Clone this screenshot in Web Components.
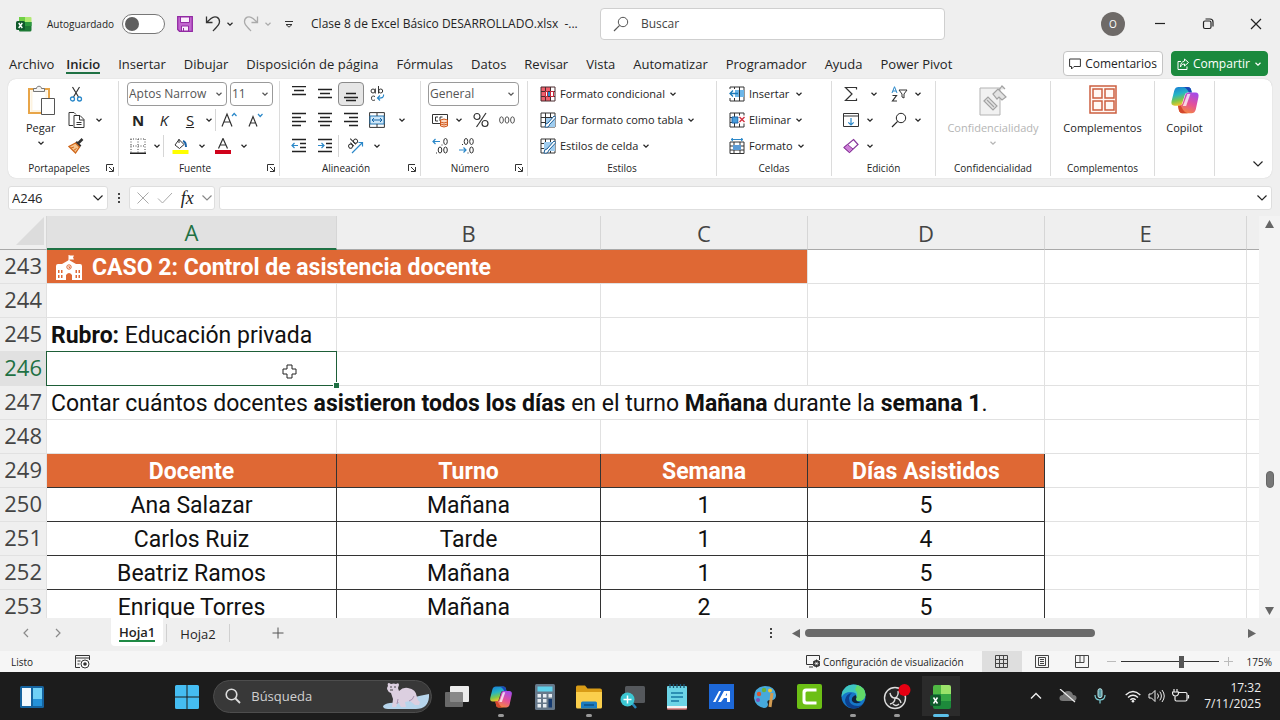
<!DOCTYPE html>
<html lang="es">
<head>
<meta charset="utf-8">
<title>Clase 8 de Excel Básico DESARROLLADO.xlsx</title>
<style>
  body {
    margin: 0;
    background: #efefef;
    color: #242424;
    font: 12px/16px "Open Sans", "Noto Sans", sans-serif;
  }
</style>
</head>
<body>
<excel-app></excel-app>

<script>
const grid = (color) => `<path d="M1 1h14v14H1zM1 5.5h14M1 10.5h14M5.5 1v14M10.5 1v14" stroke="${color}" fill="none"/>`;
const lines = (rows) => `<path d="${rows.map(([x, y, w]) => `M${x} ${y}.5h${w}`).join("")}" stroke="#222" stroke-width="1.3"/>`;
const copilot = `
  <defs>
    <linearGradient id="ca" x1="0" y1="0" x2="0.3" y2="1"><stop offset="0" stop-color="#1a78d8"/><stop offset=".45" stop-color="#25b5c4"/><stop offset=".75" stop-color="#7fc64a"/><stop offset="1" stop-color="#f3c52b"/></linearGradient>
    <linearGradient id="cb" x1=".7" y1="0" x2=".3" y2="1"><stop offset="0" stop-color="#a54be8"/><stop offset=".5" stop-color="#e4509a"/><stop offset="1" stop-color="#f58a3a"/></linearGradient>
  </defs>
  <path d="M13 2h6c2 0 3 1 3.500 3l.8 3h-4c-2 0-3 1-3.600 3l-2.500 8c-.6 2-1.500 3-3.500 3H5c-3 0-4-2-3.300-5L4.500 6C5.300 3 7 2 9 2z" fill="url(#ca)"/>
  <path d="M13 2h6c2 0 3 1 3.500 3l.8 3h-3c-2-4-4-6-7.300-6z" fill="#1c47b8"/>
  <path d="M19 30h-6c-2 0-3-1-3.500-3l-1-5c3 0 4.500-1 5.200-3l2.500-8c.6-2 1.500-3 3.500-3H27c3 0 4 2 3.300 5L27.500 26c-.8 3-2.500 4-4.500 4z" fill="url(#cb)"/>
  <path d="M19 30h-6c-2 0-3-1-3.500-3l-1-5h3c2 4 3.500 7 7.500 8z" fill="#d4472e"/>
  <path d="M18.500 9.500h3.200l-4.500 13h-3.500z" fill="#fff" opacity=".75"/>`;

// name: [width, height, viewBox, markup]
const ICONS = {
  caret: [8, 8, "0 0 8 8", `<path d="M1.500 2.800L4 5.200l2.500-2.400" fill="none" stroke="currentColor" stroke-width="1.200"/>`],
  chevron: [12, 12, "0 0 12 12", `<path d="M1.500 3.500L6 8l4.500-4.500" fill="none" stroke="currentColor" stroke-width="1.200"/>`],
  left: [12, 12, "0 0 12 12", `<path d="M8 2L4 6l4 4" fill="none" stroke="#8a8a8a" stroke-width="1.200"/>`],
  right: [12, 12, "0 0 12 12", `<path d="M4 2l4 4-4 4" fill="none" stroke="#8a8a8a" stroke-width="1.200"/>`],
  excel: [16, 16, "0 0 16 16", `<path d="M3 1h7v5H3z" fill="#6fd045"/><path d="M9 1h5.500q1 0 1 1v4H9z" fill="#b2ea74"/><path d="M3 6h12.500v8q0 1.500-1.500 1.500H4q-1 0-1-1z" fill="#1d7a35"/><path d="M9 6h6.500v4H9z" fill="#2c9a3e"/><rect y="5" width="9" height="9" rx="1.500" fill="#0f5a2b"/><path d="M2.700 7l3.600 5M6.300 7l-3.600 5" stroke="#fff" stroke-width="1.400"/>`],
  save: [16, 16, "0 0 16 16", `<path d="M.7.700h14.600v14.600H2.500L.7 13.500z" fill="#c265cf" stroke="#922aa3" stroke-width="1.300"/><path d="M3.500 1h9v5.500h-9zM4.500 10h7v5h-7z" fill="#fbeefc" stroke="#922aa3"/><path d="M6.500 12v3" stroke="#922aa3"/>`],
  undo: [16, 18, "0 0 16 18", `<path d="M1.500 1.500v6h6M2 7l4-3.500c4-3.500 8.500-1 8.500 3 0 2.500-1 3.500-6.500 9.500" fill="none" stroke="#333" stroke-width="1.300"/>`],
  redo: [16, 18, "0 0 16 18", `<path d="M14.500 1.500v6h-6M14 7l-4-3.500c-4-3.500-8.500-1-8.500 3 0 2.500 1 3.500 6.500 9.500" fill="none" stroke="#aaa" stroke-width="1.300"/>`],
  custom: [10, 10, "0 0 10 10", `<path d="M1 2.500h8M2 5.500h6L5 8.200z" stroke="#333" fill="none"/>`],
  lens: [16, 16, "0 0 16 16", `<circle cx="10" cy="6" r="4.700" fill="none" stroke="currentColor"/><path d="M6.600 9.300L1 15" stroke="currentColor" stroke-width="1.200"/>`],
  min: [12, 12, "0 0 12 12", `<path d="M1 5.500h10" stroke="#222" stroke-width="1.200"/>`],
  restore: [12, 12, "0 0 12 12", `<rect x="1.500" y="3" width="7.500" height="7.500" rx="1.500" fill="none" stroke="#222" stroke-width="1.200"/><path d="M3.500 1h4.500Q11 1 11 4v4.500" fill="none" stroke="#222" stroke-width="1.200"/>`],
  close: [12, 12, "0 0 12 12", `<path d="M1 1l10 10M11 1L1 11" stroke="#222" stroke-width="1.200"/>`],
  comment: [12, 12, "0 0 12 12", `<path d="M.6 1h10.800v7.500H5L2.500 11V8.500H.6z" fill="none" stroke="#333"/>`],
  share: [12, 12, "0 0 12 12", `<path d="M4 3.500H1v8h9V8.500M7.500 1l4 3.500-4 3.500V6C5 6 4 7 3.500 9c0-3.500 1.500-5.500 4-6z" fill="none" stroke="#fff"/>`],
  launch: [8, 8, "0 0 8 8", `<path d="M.5 7V.5H7M3 3l4 4M7.500 3v4.500H3" fill="none" stroke="#333"/>`],
  paste: [28, 32, "0 0 28 32", `<path d="M2 4h20v24H2z" fill="#fff" stroke="#e8a548" stroke-width="2"/><path d="M3.500 5h17v22h-17z" fill="#fdf3e0"/><path d="M5.500 7h13v18h-13z" fill="#fff"/><path d="M6.500 6.500V3.500h3C9.500.5 14.500.500 14.500 3.500h3v3z" fill="#f3f3f3" stroke="#777"/><path d="M14.500 13.500h13v16h-13z" fill="#fff" stroke="#555"/>`],
  cut: [14, 16, "0 0 14 16", `<path d="M3.500 1l6 10M10.500 1l-6 10" stroke="#333" stroke-width="1.200"/><circle cx="3.500" cy="13" r="2" fill="none" stroke="#2b88c9" stroke-width="1.300"/><circle cx="10.500" cy="13" r="2" fill="none" stroke="#2b88c9" stroke-width="1.300"/>`],
  copy: [17, 16, "0 0 17 16", `<path d="M5 13.500H1V.5h5l2 2M6 3.500h6l4 4V15.500H6zM11.500 3.500V8H16M8.500 10.500h5M8.500 12.500h5" fill="none" stroke="#333"/>`],
  brush: [16, 16, "0 0 16 16", `<path d="M14.500 1l-5 5M8 4l4.500 4.500" stroke="#333" stroke-width="2.500"/><path d="M7.500 5L1 8.500 7.500 15 11.500 9z" fill="#f6c48e" stroke="#d0681c" stroke-width="1.300"/><path d="M3 10l3-1M5.500 12.500l3-2" stroke="#d0681c"/>`],
  borders: [16, 16, "0 0 16 16", `<path d="M.5 1h15M.5 8h15M1 1v14M8 1v14M15 1v14" stroke="#444" stroke-dasharray="1 1.500"/><path d="M0 15.300h16" stroke="#222" stroke-width="1.400"/>`],
  fill: [17, 16, "0 0 17 16", `<path d="M7 1.500l5 5-4.500 4L3 7z" fill="none" stroke="#333"/><path d="M7 1v4" stroke="#333"/><path d="M11 3q3 1 3 6" stroke="#1c64a8" stroke-width="2" fill="none"/><path d="M.5 12h16v4H.5z" fill="#ffff00"/>`],
  fontcolor: [16, 16, "0 0 16 16", `<path d="M3.500 10.500L8 .500l4.500 10M5 7h6" fill="none" stroke="#333" stroke-width="1.200"/><path d="M0 12h16v4H0z" fill="#d0021b"/>`],
  bigger: [16, 16, "0 0 16 16", `<path d="M1 14.500L6 2l5 12.500M2.800 10h6.400" fill="none" stroke="#333" stroke-width="1.200"/><path d="M11 4l2.200-2.500L15.500 4" fill="none" stroke="#2b88c9" stroke-width="1.200"/>`],
  smaller: [15, 16, "0 0 15 16", `<path d="M1 14.500L5 4.500l4 10M2.300 11h5.400" fill="none" stroke="#333" stroke-width="1.200"/><path d="M10 2l2.200 2.500L14.500 2" fill="none" stroke="#2b88c9" stroke-width="1.200"/>`],
  atop: [16, 16, "0 0 16 16", lines([[1, 0, 14], [3, 4, 10], [1, 8, 14]])],
  amid: [16, 16, "0 0 16 16", lines([[1, 3, 14], [3, 7, 10], [1, 11, 14]])],
  abot: [16, 16, "0 0 16 16", lines([[3, 7, 10], [1, 11, 14], [3, 14, 10]])],
  wrap: [15, 16, "0 0 15 16", `<g fill="none" stroke="#333"><circle cx="3" cy="5" r="2"/><path d="M5.300 2.500v5M8.500 0v7.500M5 10.500q-3.500-1.500-3.500 1.700T5 14"/><circle cx="10.700" cy="5" r="2"/></g><path d="M13.500 8.500q1 4-5.500 3.500M10 9.500L7.500 12l2.500 2.500" fill="none" stroke="#2b88c9" stroke-width="1.200"/>`],
  aleft: [16, 16, "0 0 16 16", lines([[1, 1, 14], [1, 5, 9], [1, 9, 14], [1, 13, 9]])],
  acenter: [16, 16, "0 0 16 16", lines([[1, 1, 14], [3, 5, 10], [1, 9, 14], [3, 13, 10]])],
  aright: [16, 16, "0 0 16 16", lines([[1, 1, 14], [6, 5, 9], [1, 9, 14], [6, 13, 9]])],
  merge: [16, 16, "0 0 16 16", `<path d="M.6.600h14.800v14.800H.6z" fill="#fff" stroke="#333"/><path d="M1 4h14v8H1z" fill="#cfe7f8" stroke="#2477b3"/><path d="M8 1v3M8 12v3" stroke="#333"/><path d="M3 8h10M5 6L3 8l2 2M11 6l2 2-2 2" fill="none" stroke="#1667a8"/>`],
  outdent: [16, 16, "0 0 16 16", lines([[1, 1, 14], [9, 5, 6], [9, 9, 6], [1, 13, 14]]) + `<path d="M7 7.500H1M3.500 5L1 7.500 3.500 10" fill="none" stroke="#2b88c9" stroke-width="1.200"/>`],
  indent: [16, 16, "0 0 16 16", lines([[1, 1, 14], [9, 5, 6], [9, 9, 6], [1, 13, 14]]) + `<path d="M1 7.500h6M4.500 5L7 7.500 4.500 10" fill="none" stroke="#2b88c9" stroke-width="1.200"/>`],
  orient: [17, 16, "0 0 17 16", `<g fill="none" stroke="#333" transform="rotate(-45 5 6)"><circle cx="2.500" cy="6.500" r="2"/><path d="M4.800 4v5M7.500 1v8"/><circle cx="9.500" cy="6.500" r="2"/></g><path d="M5 15L15.500 4.500M11.500 4.500h4v4" fill="none" stroke="#2b88c9" stroke-width="1.200"/>`],
  money: [16, 16, "0 0 16 16", `<path d="M.5 2.500h15v9H.5z" fill="#fff" stroke="#333"/><path d="M6 5H3.500v4H6M10.500 5H8v4h1.500" fill="none" stroke="#333"/><path d="M8.500 8q3.500-2 7 0v6q-3.500 2-7 0z" fill="#fbd9c4" stroke="#d0591c"/><path d="M8.500 10q3.500 2 7 0M8.500 12q3.500 2 7 0" fill="none" stroke="#d0591c"/>`],
  percent: [16, 16, "0 0 16 16", `<g fill="none" stroke="#333" stroke-width="1.200"><circle cx="4" cy="4.500" r="3"/><circle cx="12" cy="11.500" r="3"/><path d="M13 1L3.500 15"/></g>`],
  thousands: [16, 10, "0 0 16 10", `<g fill="none" stroke="#555"><ellipse cx="2.500" cy="5" rx="1.900" ry="3.200"/><ellipse cx="8" cy="5" rx="1.900" ry="3.200"/><ellipse cx="13.500" cy="5" rx="1.900" ry="3.200"/></g>`],
  incdec: [16, 16, "0 0 16 16", `<g fill="none" stroke="#333"><ellipse cx="13.500" cy="3.500" rx="1.800" ry="3"/><ellipse cx="8" cy="12" rx="1.800" ry="3"/><ellipse cx="13.500" cy="12" rx="1.800" ry="3"/><path d="M10 6.500v1M4.500 14.500v1"/></g><path d="M8 3.500H1M3.500 1L1 3.500 3.500 6" fill="none" stroke="#2b88c9" stroke-width="1.200"/>`],
  decdec: [16, 16, "0 0 16 16", `<g fill="none" stroke="#333"><ellipse cx="8" cy="3.500" rx="1.800" ry="3"/><ellipse cx="13.500" cy="3.500" rx="1.800" ry="3"/><ellipse cx="13.500" cy="12" rx="1.800" ry="3"/><path d="M4.500 6v1M10 14.500v1"/></g><path d="M1 12h7M5.500 9.500L8 12l-2.500 2.500" fill="none" stroke="#2b88c9" stroke-width="1.200"/>`],
  cond: [16, 16, "0 0 16 16", `<path d="M1 1h9v4H1zM1 10h9v5H1zM1 5h4v5H1z" fill="#f0606c"/>${grid("#4a2a2e")}<path d="M5.500 5.500h2v5h-2zM10.500 5.500h3v5h-3z" fill="#fff" stroke="#c8283a"/><path d="M8 6h2v4H8z" fill="#2b88c9"/>`],
  tablefmt: [16, 16, "0 0 16 16", `${grid("#333")}<path d="M6 6h9v9H6z" fill="#9fcdf0"/><path d="M5 15q0-4 3-4L14 4l2 1.500L9.500 12.500Q9 16 5 15z" fill="#fff" stroke="#1d5f97"/>`],
  cellstyle: [16, 16, "0 0 16 16", `${grid("#333")}<path d="M4 4h11v9H4z" fill="#9fcdf0"/><path d="M4 15q0-4 3-4L14 3l2 1.500L8.500 12.500Q8 16 4 15z" fill="#fff" stroke="#1d5f97"/>`],
  insertc: [16, 16, "0 0 16 16", `${grid("#333")}<path d="M5 4h10v7H5z" fill="#6cb6e8"/><path d="M0 3h6v9H0z" fill="#fff"/><path d="M9 7.500H1M4 4.500l-3 3 3 3" fill="none" stroke="#1c7ab8" stroke-width="1.300"/><path d="M10.500 4v7" stroke="#333"/>`],
  deletec: [16, 16, "0 0 16 16", `${grid("#333")}<path d="M3 5h6v6H3z" fill="#4a9edb" stroke="#1c64a8"/><path d="M9.500 3.500H16v8H9.500z" fill="#fff"/><path d="M10.500 5l5 5M15.500 5l-5 5" stroke="#d23040" stroke-width="1.400"/>`],
  formatc: [16, 16, "0 0 16 16", `<path d="M1 4h14v11.500H1zM1 8h14M1 12h14M5 4v11M11 4v11" fill="none" stroke="#333"/><path d="M4 7h8v5H4z" fill="#5b9bd5"/><path d="M2 1.500h12M4 0L2 1.500 4 3M12 0l2 1.500L12 3" fill="none" stroke="#2b88c9"/>`],
  sigma: [14, 16, "0 0 14 16", `<path d="M12.500 3.500V1.500H1.500L8 8l-6.500 6.500h11v-2" fill="none" stroke="#333" stroke-width="1.200"/>`],
  sort: [17, 16, "0 0 17 16", `<path d="M1 7L3.500.700 6 7M1.800 5h3.400" fill="none" stroke="#2b88c9"/><path d="M1.500 9.500h4L1.500 15h4.500" fill="none" stroke="#333" stroke-width="1.200"/><path d="M8 4h8l-3 4v4l-2-1V8z" fill="none" stroke="#333"/>`],
  filldown: [16, 14, "0 0 16 14", `<path d="M.5.500h15v13H.5zM.5 3h15" fill="none" stroke="#333"/><path d="M8 5v7M5.300 9.300L8 12l2.700-2.700" fill="none" stroke="#2b88c9" stroke-width="1.200"/>`],
  eraser: [16, 16, "0 0 16 16", `<path d="M10.500 1.500l4.500 5-8.500 8-5.500-5z" fill="#fff" stroke="#8a3a9c" stroke-width="1.200"/><path d="M4.500 6.500L1 9.500l5.500 5L10 11z" fill="#cf7fd8" stroke="#8a3a9c"/>`],
  label: [28, 32, "0 0 28 32", `<path d="M1 3h20v27H1z" fill="#f1f1f1" stroke="#b3b3b3"/><g stroke="#a3a3a3" fill="#e3e3e3" stroke-width="1.200"><path d="M5 16l4-4 9 9-4 4z"/><path d="M14 9l5-5 8 8-4 3-3-3-2 2z"/><path d="M20 5l3-4 3 3M8 15l7 7"/></g>`],
  addins: [28, 30, "0 0 28 30", `<g fill="#fff8f4" stroke="#cc5f40" stroke-width="1.500"><path d="M1 1h26v27H1z"/><path d="M4 4h9v9H4zM16 4h9v9h-9zM4 16h9v9H4zM16 16h9v9h-9z"/></g>`],
  copilot: [30, 30, "0 0 32 32", copilot],
  cancel: [14, 14, "0 0 14 14", `<path d="M1.500 1.500l11 11M12.500 1.500l-11 11" stroke="#aaa"/>`],
  accept: [16, 14, "0 0 16 14", `<path d="M1 7.500L5.500 12 15 2" fill="none" stroke="#aaa"/>`],
  dots: [4, 14, "0 0 4 14", `<path d="M1 2h2v2H1zM1 6h2v2H1zM1 10h2v2H1z" fill="#444"/>`],
  school: [26, 26, "0 0 26 26", `<path d="M13 0v6" stroke="#fff"/><path d="M13 .5h5l-1 2 1 2h-5z" fill="#fff"/><path d="M0 11q0-2 2-2h4l7-4 7 4h4q2 0 2 2v14H0z" fill="#fff"/><circle cx="13" cy="12" r="2.200" fill="none" stroke="#df6834"/><path d="M13 11v1.500h1" fill="none" stroke="#df6834"/><path d="M10 25.500V20q3-4 6 0v5.500zM2 15h1.500v3H2zM5 15h1.500v3H5zM2 20h1.500v3H2zM5 20h1.500v3H5zM19.500 15H21v3h-1.500zM22.500 15H24v3h-1.500zM19.500 20H21v3h-1.500zM22.500 20H24v3h-1.500z" fill="#df6834"/>`],
  cross: [15, 15, "0 0 15 15", `<path d="M5 1h5v4h4v5h-4v4H5v-4H1V5h4z" fill="#fff" stroke="#222"/>`],
  corner: [28, 28, "0 0 28 28", `<path d="M28 0v28H0z" fill="#dcdcdc"/>`],
  up: [9, 8, "0 0 9 8", `<path d="M4.500 0L9 8H0z" fill="#666"/>`],
  down: [9, 8, "0 0 9 8", `<path d="M4.500 8L9 0H0z" fill="#666"/>`],
  prev: [8, 9, "0 0 8 9", `<path d="M0 4.500L8 0v9z" fill="#666"/>`],
  next: [8, 9, "0 0 8 9", `<path d="M8 4.500L0 0v9z" fill="#666"/>`],
  plus: [12, 12, "0 0 12 12", `<path d="M6 .5v11M.5 6h11" stroke="#555"/>`],
  macro: [15, 14, "0 0 15 14", `<path d="M5 12.500H.5V.5h14V5M.5 3h14M2.500 6h3M2.500 9h2" fill="none" stroke="#333"/><circle cx="10" cy="9" r="4" fill="#fff" stroke="#333"/><circle cx="10" cy="9" r="1.800" fill="#333"/>`],
  display: [15, 13, "0 0 15 13", `<path d="M7 9.500H.5V.5h13V5M3 12h4" fill="none" stroke="#333"/><circle cx="10.500" cy="8.500" r="2.700" fill="#fff" stroke="#333" stroke-width="1.600"/><path d="M10.500 4.500v8M7 6.500l7 4M14 6.500l-7 4" stroke="#333"/><circle cx="10.500" cy="8.500" r="1" fill="#fff"/>`],
  normal: [13, 13, "0 0 13 13", `<path d="M.5.500h12v12H.5zM.5 4.500h12M.5 8.500h12M4.500.500v12M8.500.500v12" fill="none" stroke="#444"/>`],
  page: [14, 13, "0 0 14 13", `<path d="M.5.500h13v12H.5zM3.500 2.500h7v8h-7zM5 4.500h4M5 6.500h4M5 8.500h4" fill="none" stroke="#444"/>`],
  breaks: [14, 13, "0 0 14 13", `<path d="M.5.500h13v12H.5zM.5 7.500H9V.5M5 .5v7" fill="none" stroke="#444"/>`],
  minus2: [9, 9, "0 0 9 9", `<path d="M0 4.500h9" stroke="#bbb"/>`],
  plus2: [9, 9, "0 0 9 9", `<path d="M0 4.500h9M4.500 0v9" stroke="#bbb"/>`],
  // taskbar
  widgets: [24, 22, "0 0 24 22", `<rect width="24" height="22" rx="1.500" fill="#15639f"/><rect x="2" y="2" width="9" height="18" fill="#f2f8fd"/><rect x="13" y="2" width="9" height="11" fill="#6fd0f6"/><rect x="13" y="13" width="9" height="7" fill="#2491d8"/>`],
  windows: [24, 24, "0 0 24 24", `<path d="M0 1.500Q0 0 1.500 0h10v11.500H0zM12.500 0h10Q24 0 24 1.500v10H12.500zM0 12.500h11.500V24h-10Q0 24 0 22.500zM12.500 12.500H24v10q0 1.500-1.500 1.500h-10z" fill="#45bdf2"/>`],
  search: [16, 16, "0 0 16 16", `<circle cx="6.500" cy="6.500" r="5.300" fill="none" stroke="#ddd" stroke-width="1.600"/><path d="M10.500 10.500L15 15" stroke="#ddd" stroke-width="1.800"/>`],
  bear: [46, 28, "0 0 46 28", `<path d="M0 24q4-4 14-3 14-6 32-9v3q-1 12-13 12H5q-5 0-5-3z" fill="#b7d5ec"/><path d="M5 4q-1-3 1-3l2 1q3-1 5 0 3-2 3 1l-1 3 1 3q4-4 9-3 8 1 9 9 0 3 3 5l-1 3h-4l-5-4-5 1 1 5h-5l-3-5-2 5H9l1-8-2-6q-3-1-4-4 0-2 1-3z" fill="#dccfe0"/><path d="M14 22l1-5M26 19q4-1 5-5" stroke="#a58fae" fill="none"/><circle cx="8" cy="5" r=".8" fill="#333"/><circle cx="12" cy="5" r=".8" fill="#333"/><path d="M7 8h3" stroke="#444"/>`],
  taskview: [26, 24, "0 0 26 24", `<rect x="6" y="1" width="19" height="16" rx="1" fill="#ececec"/><rect x="1" y="7" width="18" height="15" rx="1" fill="#777" opacity=".85"/>`],
  copilotapp: [24, 24, "0 0 32 32", copilot],
  calc: [20, 26, "0 0 20 26", `<rect width="20" height="26" rx="1.500" fill="#66788a"/><rect x="2.500" y="2.500" width="15" height="5" fill="#5fd0ea"/><path d="M2.500 10h3.500v3.500H2.500zM8 10h3.500v3.500H8zM13.500 10H17v3.500h-3.500zM2.500 15h3.500v3.500H2.500zM8 15h3.500v3.500H8zM2.500 20h3.500v3.500H2.500zM8 20h3.500v3.500H8z" fill="#e8edf2"/><path d="M13.500 15H17v8.500h-3.500z" fill="#153a70"/>`],
  folder: [26, 24, "0 0 26 24", `<path d="M0 2q0-1.500 1.500-1.500H9l2.500 3H24q2 0 2 2V20H0z" fill="#d99c16"/><path d="M0 7h26v15q0 1.500-1.500 1.500h-23Q0 23.500 0 22z" fill="#fbcf4c"/><path d="M5 23.500V18q0-1.500 1.500-1.500h13q1.500 0 1.500 1.500v5.500z" fill="#1c7cc0"/><path d="M8 20h10" stroke="#0d4f82" stroke-width="1.500"/>`],
  magnify: [26, 24, "0 0 26 24", `<rect x="5" y="1" width="20" height="17" rx="1.500" fill="#55585c"/><path d="M11 17l5 6" stroke="#2986b8" stroke-width="2.500"/><circle cx="7.500" cy="14.500" r="7" fill="#3cc6d2"/><path d="M7.500 10.500v8M3.500 14.500h8" stroke="#fff" stroke-width="1.500"/>`],
  notepad: [20, 26, "0 0 20 26", `<rect y="2" width="20" height="22" rx="1" fill="#6cd4e6"/><path d="M0 22h20v2q0 1.500-1.500 1.500h-17Q0 25.500 0 24z" fill="#f2f2f2"/><path d="M0 25h20" stroke="#c43c3c"/><path d="M3 0v4M6.500 0v4M10 0v4M13.500 0v4M17 0v4" stroke="#1b5775" stroke-width="1.300"/><path d="M4 9h12M4 13h12M4 17h8" stroke="#1778a4" stroke-width="1.300"/>`],
  myasus: [25, 25, "0 0 25 25", `<path d="M0 0h25v25H0z" fill="#1d68d8"/><path d="M4 18L10 7h2L6.500 18zM9 18l6-11h6v11h-3v-4h-3L12 18zM16.500 11.500H18V9z" fill="#fff"/>`],
  paint: [24, 24, "0 0 24 24", `<path d="M12 1Q22 1 23 10q0 6-6 5-4 0-2 4 0 4-4 4-9-2-10-10Q1 2 12 1z" fill="#46a9dc"/><circle cx="6" cy="9" r="2.200" fill="#d8552e"/><circle cx="11" cy="5" r="2.200" fill="#6cb33c"/><circle cx="17" cy="5.500" r="2" fill="#f1c232"/><circle cx="5" cy="15" r="2" fill="#7d4fb5"/><path d="M19 8l-2 14" stroke="#d29b52" stroke-width="3"/>`],
  camtasia: [25, 25, "0 0 25 25", `<rect width="25" height="25" rx="2" fill="#6cbf15"/><path d="M19.500 7.500V4.500H9Q5.500 4.500 5.500 8v9q0 3.500 3.500 3.500h10.500v-3H10Q8.500 17.500 8.500 16V9Q8.500 7.500 10 7.500z" fill="#fff"/>`],
  edge: [25, 25, "0 0 25 25", `<circle cx="12.500" cy="12.500" r="12" fill="#1677c8"/><path d="M.7 11Q2 1 12.500.5 24 1 24.500 11q-1 6-7 6-4-.5-2.500-3 2-6-5-6Q3 8 .7 13z" fill="#3fc6c0"/><path d="M16 1Q24 3 24.500 11q-1 6-7 6-4-.5-2.500-3 3-5-1-8z" fill="#62d968"/><path d="M8 14q0 8 9 8 3 0 5-2-4 5-10 4.500Q4 23 4 16q1-6 7-7-3 2-3 5z" fill="#0d3f8c"/><path d="M14.500 11q2 2 .5 4 0 3 5 3-6 3-9-1-1-4 3.500-6z" fill="#10233c"/>`],
  obs: [28, 26, "0 0 28 26", `<circle cx="12" cy="14" r="10.500" fill="#262626" stroke="#ddd" stroke-width="1.400"/><path d="M12 14q-4 0-5-5M12 14q4-2 3-7M12 14q0 5-5 6M12 14q5 0 6 5M10 20q3 3 6 0" fill="none" stroke="#ddd" stroke-width="1.400"/><circle cx="21.500" cy="6" r="6" fill="#e60012"/>`],
  excelapp: [24, 26, "0 0 24 26", `<path d="M4 3q0-2 2-2h8v9H4z" fill="#4fb843"/><path d="M12 1h8q2 0 2 2v7H12z" fill="#9be36a"/><path d="M4 10h18v13q0 2-2 2H6q-2 0-2-2z" fill="#1d8a3b"/><path d="M12 10h10v7H12z" fill="#37a845"/><rect x="1" y="11" width="11" height="11" rx="2" fill="#0f5a2b"/><path d="M4.500 13.500l4 6M8.500 13.500l-4 6" stroke="#fff" stroke-width="1.500"/>`],
  trayup: [12, 12, "0 0 12 12", `<path d="M1 8.500l5-5 5 5" fill="none" stroke="#eee" stroke-width="1.400"/>`],
  cloud: [18, 14, "0 0 18 14", `<path d="M4 12Q0 12 .5 8.500 1 6 4 6q1-4 5-4t5 4q4 0 3.500 3.500Q17 12 14 12z" fill="#777"/><path d="M1 0l15 13" stroke="#eee" stroke-width="1.200"/>`],
  mic: [12, 16, "0 0 12 16", `<rect x="4" y=".7" width="4" height="9" rx="2" fill="#5a98a0" stroke="#b8e5e8"/><path d="M1 7q0 5 5 5t5-5M6 12v3.500" fill="none" stroke="#7fd0d8" stroke-width="1.200"/>`],
  wifi: [16, 13, "0 0 16 13", `<g fill="none" stroke="#eee" stroke-width="1.400"><path d="M.7 5Q8-2 15.300 5M3 7.500q5-4.500 10 0M5.300 9.800q2.700-2.300 5.400 0"/></g><circle cx="8" cy="11.300" r="1.300" fill="#eee"/>`],
  sound: [17, 14, "0 0 17 14", `<path d="M1 5h2.500L7 1.500v11L3.500 9H1zM9.500 4.500q2 2.500 0 5M11.800 2.700q3.200 4.300 0 8.600M14 1q4.500 6 0 12" fill="none" stroke="#eee"/>`],
  battery: [18, 14, "0 0 18 14", `<path d="M7 3.500h6.500q1.500 0 1.500 1.500v5.500q0 1.500-1.500 1.500h-9Q3 12 3 10.500V7M16.500 6v3.500M2 0v3M5 0v3M.5 3h6v1.500Q6 7 3.500 7T.5 4.500z" fill="none" stroke="#eee" stroke-width="1.200"/>`],
};

class UiElement extends HTMLElement {
  constructor() {
    super();
    this.shadow = this.attachShadow({ mode: "open" });
  }

  connectedCallback() {
    this.shadow.innerHTML = `
      <style>
        * { box-sizing: border-box; }
        button, input, select { font: inherit; color: inherit; margin: 0; padding: 0; border: 0; background: none; }
        ${this.styles()}
      </style>
      ${this.render()}
    `;
  }

  styles() { return ""; }
  render() { return ""; }
}

class UiIcon extends UiElement {
  styles() {
    return `:host { display: inline-flex; flex: none; } svg { display: block; }`;
  }
  render() {
    const [w, h, box, markup] = ICONS[this.getAttribute("name")];
    return `<svg width="${w}" height="${h}" viewBox="${box}" aria-hidden="true">${markup}</svg>`;
  }
}

// Icon button; its width comes from --w so carets and icons share one class
class ToolButton extends UiElement {
  styles() {
    return `
      :host { display: flex; flex: none; width: var(--w, 26px); }
      :host([text]) { width: auto; }
      button { display: flex; align-items: center; justify-content: center; gap: 4px; width: 100%; height: 24px; white-space: nowrap; }
      :host([selected]) button { background: #e6e6e6; border: 1px solid #8a8a8a; border-radius: 4px; }
    `;
  }
  render() {
    const label = this.getAttribute("label");
    return `
      <button ${label ? `aria-label="${label}"` : ""}>
        ${this.hasAttribute("icon") ? `<ui-icon name="${this.getAttribute("icon")}"></ui-icon>` : ""}
        <slot></slot>
        ${this.hasAttribute("caret") ? `<ui-icon name="caret"></ui-icon>` : ""}
      </button>
    `;
  }
}

class BigButton extends UiElement {
  styles() {
    return `
      :host { display: block; }
      button { display: flex; flex-direction: column; align-items: center; gap: 3px; padding-top: 4px; white-space: nowrap; }
      .pic { display: flex; height: 32px; }
    `;
  }
  render() {
    return `
      <button>
        <span class="pic"><ui-icon name="${this.getAttribute("icon")}"></ui-icon></span>
        <slot></slot>
        ${this.hasAttribute("caret") ? `<ui-icon name="caret"></ui-icon>` : ""}
      </button>
    `;
  }
}

class DropDown extends UiElement {
  styles() {
    return `
      :host { display: flex; align-items: center; flex: none; width: var(--w); height: 24px; padding: 0 3px 0 1px;
        border: 1px solid #9a9a9a; border-radius: 4px; background: #fff; color: #555; font-size: 12px; }
      select { appearance: none; flex: 1; min-width: 0; outline: none; }
    `;
  }
  render() {
    return `
      <select aria-label="${this.getAttribute("label")}"><option>${this.getAttribute("value")}</option></select>
      <ui-icon name="caret"></ui-icon>
    `;
  }
}

class RibbonGroup extends UiElement {
  styles() {
    return `
      :host { display: flex; flex-direction: column; flex: none; width: var(--group); margin: 2px 0; border-right: 1px solid #dcdcdc; }
      .body { flex: 1; display: flex; padding: 0 6px; }
      :host([big]) .body { justify-content: center; }
      footer { display: flex; align-items: center; height: 16px; font-size: 10px; padding: 0 4px; }
      span { flex: 1; text-align: center; }
    `;
  }
  render() {
    const name = this.getAttribute("name");
    return `
      <div class="body"><slot></slot></div>
      <footer><span>${name || ""}</span>${this.hasAttribute("launcher") ? `<ui-icon name="launch"></ui-icon>` : ""}</footer>
    `;
  }
}

class TitleBar extends UiElement {
  styles() {
    return `
      :host { display: grid; grid-template-columns: 600fr 345fr 335fr; align-items: center; height: 48px; }
      .left { display: flex; align-items: center; padding-left: 16px; white-space: nowrap; min-width: 0; }
      label { display: flex; align-items: center; gap: 8px; margin: 0 12px 0 15px; font-size: 10px; }
      input[type=checkbox] { appearance: none; width: 43px; height: 20px; border: 1px solid #777; border-radius: 10px; background: #fff; padding: 2px; }
      input[type=checkbox]::before { content: ""; display: block; width: 14px; height: 14px; border-radius: 50%; background: #5f5f5f; }
      .quick { display: flex; align-items: center; margin-right: 5px; }
      .narrow { --w: 16px; }
      .find { display: flex; align-items: center; gap: 12px; height: 32px; padding: 0 12px; background: #fff; border: 1px solid #cfcfcf; border-radius: 4px; color: #555; }
      .find input { flex: 1; min-width: 0; outline: none; }
      .find input::placeholder { color: #444; opacity: 1; }
      .right { display: flex; align-items: center; justify-content: flex-end; padding-right: 11px; gap: 22px; }
      .avatar { width: 24px; height: 24px; border-radius: 50%; background: #6e6a68; color: #fff; font-size: 10px; line-height: 24px; text-align: center; }
    `;
  }
  render() {
    return `
      <div class="left">
        <ui-icon name="excel"></ui-icon>
        <label>Autoguardado <input type="checkbox" role="switch"></label>
        <div class="quick">
          <tool-button icon="save" label="Guardar" class="narrow"></tool-button>
          <tool-button icon="undo" label="Deshacer" style="--w: 40px"></tool-button>
          <tool-button icon="caret" label="Más" style="--w: 8px; margin-left: -7px"></tool-button>
          <tool-button icon="redo" label="Rehacer" style="--w: 34px"></tool-button>
          <tool-button icon="caret" label="Más" style="--w: 8px; margin-left: -4px; color: #aaa"></tool-button>
          <tool-button icon="custom" label="Personalizar" style="--w: 34px"></tool-button>
        </div>
        <span>Clase 8 de Excel Básico DESARROLLADO.xlsx &nbsp;-...</span>
      </div>
      <div class="find"><ui-icon name="lens"></ui-icon><input type="search" placeholder="Buscar" aria-label="Buscar"></div>
      <div class="right">
        <span class="avatar">O</span>
        <tool-button icon="min" label="Minimizar"></tool-button>
        <tool-button icon="restore" label="Restaurar"></tool-button>
        <tool-button icon="close" label="Cerrar"></tool-button>
      </div>
    `;
  }
}

class RibbonTabs extends UiElement {
  styles() {
    return `
      :host { display: flex; align-items: center; justify-content: space-between; height: 31px; padding: 0 12px 0 9px; white-space: nowrap; }
      nav { display: flex; gap: 18px; padding-top: 3px; font-size: 13px; }
      a { color: inherit; text-decoration: none; padding-bottom: 2px; }
      a:first-child { margin-right: -6px; }
      a.on { font-weight: 600; border-bottom: 2px solid #1f7144; padding-bottom: 0; }
      .side { display: flex; gap: 8px; }
      .side button { display: flex; align-items: center; gap: 4px; height: 25px; padding: 0 5px; border: 1px solid #c4c4c4; border-radius: 4px; background: #fff; }
      .side .share { background: #1b8a3e; border-color: #1b8a3e; color: #fff; }
    `;
  }
  render() {
    const tabs = ["Archivo", "Inicio", "Insertar", "Dibujar", "Disposición de página", "Fórmulas", "Datos", "Revisar", "Vista", "Automatizar", "Programador", "Ayuda", "Power Pivot"];
    return `
      <nav>${tabs.map((t) => `<a href="#" ${t === "Inicio" ? `class="on"` : ""}>${t}</a>`).join("")}</nav>
      <div class="side">
        <button><ui-icon name="comment"></ui-icon>Comentarios</button>
        <button class="share"><ui-icon name="share"></ui-icon>Compartir<ui-icon name="caret"></ui-icon></button>
      </div>
    `;
  }
}

class RibbonBar extends UiElement {
  styles() {
    return `
      :host { display: flex; height: 99px; margin: 0 8px; background: #fff; border-radius: 8px; box-shadow: 0 0 1px #bbb; overflow: hidden; font-size: 11px; }
      .rows { display: grid; grid-template-rows: repeat(3, 26px); align-items: center; }
      .row { display: flex; align-items: center; }
      .caret { --w: 12px; }
      .sep { width: 1px; height: 22px; background: #d6d6d6; }
      .end { flex: 1; display: flex; align-items: flex-end; justify-content: flex-end; padding: 8px; }
      .off { color: #b5b5b5; }
      b, i, u { font-size: 15px; }
    `;
  }
  render() {
    const caret = (style = "") => `<tool-button class="caret" icon="caret" label="Más opciones" style="${style}"></tool-button>`;
    const tool = (icon, label, extra = "") => `<tool-button icon="${icon}" label="${label}" ${extra}></tool-button>`;
    return `
      <ribbon-group name="Portapapeles" launcher style="--group: 111px">
        <big-button icon="paste" caret style="padding: 0 8px 0 12px">Pegar</big-button>
        <div class="rows">
          <div class="row">${tool("cut", "Cortar")}</div>
          <div class="row">${tool("copy", "Copiar")}${caret("margin-left: 4px")}</div>
          <div class="row">${tool("brush", "Copiar formato")}</div>
        </div>
      </ribbon-group>
      <ribbon-group name="Fuente" launcher style="--group: 161px">
        <div class="rows">
          <div class="row" style="gap: 3px; padding-left: 2px"><drop-down label="Fuente" value="Aptos Narrow" style="--w: 100px"></drop-down><drop-down label="Tamaño" value="11" style="--w: 43px"></drop-down></div>
          <div class="row"><tool-button><b>N</b></tool-button><tool-button><i>K</i></tool-button><tool-button><u>S</u></tool-button>${caret()}<span class="sep"></span>${tool("bigger", "Aumentar")}${tool("smaller", "Disminuir")}</div>
          <div class="row">${tool("borders", "Bordes")}${caret()}<span class="sep"></span>${tool("fill", "Relleno", `style="--w: 32px"`)}${caret()}${tool("fontcolor", "Color de fuente", `style="--w: 30px"`)}${caret()}</div>
        </div>
      </ribbon-group>
      <ribbon-group name="Alineación" launcher style="--group: 141px">
        <div class="rows">
          <div class="row">${tool("atop", "Superior")}${tool("amid", "Medio")}${tool("abot", "Inferior", "selected")}${tool("wrap", "Ajustar texto")}</div>
          <div class="row">${tool("aleft", "Izquierda")}${tool("acenter", "Centrar")}${tool("aright", "Derecha")}${tool("merge", "Combinar")}${caret("margin-left: 6px")}</div>
          <div class="row">${tool("outdent", "Disminuir sangría")}${tool("indent", "Aumentar sangría")}<span class="sep"></span>${tool("orient", "Orientación", `style="--w: 32px"`)}${caret()}</div>
        </div>
      </ribbon-group>
      <ribbon-group name="Número" launcher style="--group: 107px">
        <div class="rows">
          <div class="row" style="padding-left: 1px"><drop-down label="Formato de número" value="General" style="--w: 91px"></drop-down></div>
          <div class="row">${tool("money", "Contabilidad")}${caret()}${tool("percent", "Porcentaje", `style="--w: 32px"`)}${tool("thousands", "Millares", `style="--w: 20px"`)}</div>
          <div class="row">${tool("incdec", "Más decimales")}${tool("decdec", "Menos decimales")}</div>
        </div>
      </ribbon-group>
      <ribbon-group name="Estilos" style="--group: 189px">
        <div class="rows" style="padding-left: 6px">
          <div class="row"><tool-button text icon="cond" caret>Formato condicional</tool-button></div>
          <div class="row"><tool-button text icon="tablefmt" caret>Dar formato como tabla</tool-button></div>
          <div class="row"><tool-button text icon="cellstyle" caret>Estilos de celda</tool-button></div>
        </div>
      </ribbon-group>
      <ribbon-group name="Celdas" style="--group: 115px">
        <div class="rows" style="padding-left: 6px">
          <div class="row"><tool-button text icon="insertc">Insertar</tool-button>${caret("margin-left: auto")}</div>
          <div class="row"><tool-button text icon="deletec">Eliminar</tool-button>${caret("margin-left: auto")}</div>
          <div class="row"><tool-button text icon="formatc" caret>Formato</tool-button></div>
        </div>
      </ribbon-group>
      <ribbon-group name="Edición" style="--group: 104px">
        <div class="rows">
          <div class="row">${tool("sigma", "Autosuma")}${caret("margin: 0 6px 0 4px")}${tool("sort", "Ordenar")}${caret()}</div>
          <div class="row">${tool("filldown", "Rellenar")}${caret("margin-right: 10px")}${tool("lens", "Buscar")}${caret()}</div>
          <div class="row">${tool("eraser", "Borrar")}${caret()}</div>
        </div>
      </ribbon-group>
      <ribbon-group big name="Confidencialidad" style="--group: 115px"><big-button class="off" icon="label" caret>Confidencialidady</big-button></ribbon-group>
      <ribbon-group big name="Complementos" style="--group: 104px"><big-button icon="addins">Complementos</big-button></ribbon-group>
      <ribbon-group big style="--group: 60px"><big-button icon="copilot">Copilot</big-button></ribbon-group>
      <div class="end"><ui-icon name="chevron"></ui-icon></div>
    `;
  }
}

class FormulaBar extends UiElement {
  styles() {
    return `
      :host { display: flex; align-items: center; gap: 4px; padding: 8px 8px 6px; }
      .box { display: flex; align-items: center; height: 24px; background: #fff; border: 1px solid #dedede; border-radius: 3px; padding: 0 3px; }
      .name { width: 100px; font-size: 13px; }
      .dots { display: flex; width: 13px; justify-content: center; }
      input { flex: 1; min-width: 0; outline: none; }
      .fx { width: 86px; justify-content: space-between; padding: 0 1px 0 6px; color: #888; }
      em { font: italic 18px "Liberation Serif", serif; color: #222; }
      .formula { flex: 1; }
    `;
  }
  render() {
    return `
      <div class="box name"><input value="A246" aria-label="Cuadro de nombres"><ui-icon name="chevron"></ui-icon></div>
      <span class="dots"><ui-icon name="dots"></ui-icon></span>
      <div class="box fx"><ui-icon name="cancel"></ui-icon><ui-icon name="accept"></ui-icon><em>fx</em><ui-icon name="chevron"></ui-icon></div>
      <div class="box formula"><input aria-label="Barra de fórmulas"><ui-icon name="chevron"></ui-icon></div>
    `;
  }
}

class SheetGrid extends UiElement {
  styles() {
    return `
      :host { display: flex; flex: 1; min-height: 0; overflow: hidden; }
      .view { flex: 1; overflow: hidden; background: #fff; }
      table { width: 100%; table-layout: fixed; border-collapse: separate; border-spacing: 0; font: 23px/28px Roboto, sans-serif; color: #111; }
      th, td { height: 34px; padding: 3px 4px 0; border: solid #e1e1e1; border-width: 0 1px 1px 0; white-space: nowrap; font-weight: 400; text-align: left; overflow: hidden; }
      thead th, tbody th { padding: 0 4px; background: #efefef; font: 22px/26px "Open Sans", sans-serif; color: #444; text-align: center; }
      thead th { border-bottom-color: #a9a9a9; border-right-color: #d6d6d6; }
      tbody th { padding-top: 2px; vertical-align: top; text-align: right; }
      thead .on { background: #e1e1e1; color: #1f7144; border-bottom: 2px solid #1f7144; }
      tbody .on { background: #e1e1e1; color: #1f7144; }
      thead .corner { padding: 0 2px 0 0; text-align: right; }
      .orange { background: #df6834; color: #fff; font-weight: 700; }
      .orange div { display: flex; align-items: center; gap: 10px; padding-left: 5px; }
      .data { text-align: center; border-color: #333; }
      td:last-child, thead th:last-child { border-right: 0; }
      .cell { position: relative; overflow: visible; }
      .cell::before { content: ""; position: absolute; inset: -1px; border: 1px solid #1e5e38; }
      .cell::after { content: ""; position: absolute; right: -3px; bottom: -3px; width: 5px; height: 5px; background: #1f7144; border: solid #fff; border-width: 1px 0 0 1px; }
      .cell ui-icon { position: absolute; right: 39px; top: 12px; }
      .scroll { display: flex; flex-direction: column; align-items: center; width: 21px; padding: 4px 0 3px; background: #f3f3f3; }
      .scroll i { flex: 239; }
      .scroll i + b { width: 8px; height: 17px; border: 1px solid #666; border-radius: 4px; background: #777; }
      .scroll b + i { flex: 117; }
    `;
  }
  render() {
    const blank = (n) => "<td></td>".repeat(n);
    const people = [["Ana Salazar", "Mañana", 1, 5], ["Carlos Ruiz", "Tarde", 1, 4], ["Beatriz Ramos", "Mañana", 1, 5], ["Enrique Torres", "Mañana", 2, 5]];
    const rows = [
      `<td class="orange" colspan="3"><div><ui-icon name="school"></ui-icon>CASO 2: Control de asistencia docente</div></td>${blank(3)}`,
      blank(6),
      `<td><b>Rubro:</b> Educación privada</td>${blank(5)}`,
      `<td class="cell"><ui-icon name="cross"></ui-icon></td>${blank(5)}`,
      `<td colspan="4">Contar cuántos docentes <b>asistieron todos los días</b> en el turno <b>Mañana</b> durante la <b>semana 1</b>.</td>${blank(2)}`,
      blank(6),
      ["Docente", "Turno", "Semana", "Días Asistidos"].map((t) => `<td class="data orange">${t}</td>`).join("") + blank(2),
      ...people.map((p) => p.map((t) => `<td class="data">${t}</td>`).join("") + blank(2)),
    ];
    return `
      <div class="view">
        <table>
          <colgroup><col style="width: 47px"><col style="width: 290px"><col style="width: 264px"><col style="width: 207px"><col style="width: 237px"><col><col style="width: 12px"></colgroup>
          <thead><tr><th class="corner"><ui-icon name="corner"></ui-icon></th><th class="on">A</th><th>B</th><th>C</th><th>D</th><th>E</th><th></th></tr></thead>
          <tbody>${rows.map((r, i) => `<tr><th ${i === 3 ? `class="on"` : ""}>${243 + i}</th>${r}</tr>`).join("")}</tbody>
        </table>
      </div>
      <div class="scroll"><ui-icon name="up"></ui-icon><i></i><b></b><i></i><ui-icon name="down"></ui-icon></div>
    `;
  }
}

class SheetTabs extends UiElement {
  styles() {
    return `
      :host { display: flex; align-items: center; height: 33px; padding-bottom: 3px; }
      .arrows { display: flex; gap: 20px; width: 111px; padding-left: 20px; }
      a { color: inherit; text-decoration: none; font-size: 13px; }
      .on { align-self: flex-start; height: 28px; padding: 6px 8px 0; background: #fff; border-radius: 0 0 4px 4px; font-weight: 600; }
      .on span { display: block; border-bottom: 2px solid #1f8a45; }
      .other { margin-left: 3px; padding: 2px 13px 0; border: solid #d0d0d0; border-width: 0 1px; }
      .add { margin-left: 42px; }
      .bar { display: flex; align-items: center; gap: 5px; width: 511px; margin-left: auto; padding-right: 24px; }
      .dots { margin-right: 14px; }
      .bar i { flex: 290; height: 8px; border-radius: 4px; background: #6b6b6b; }
      .bar s { flex: 143; }
    `;
  }
  render() {
    return `
      <div class="arrows"><ui-icon name="left"></ui-icon><ui-icon name="right"></ui-icon></div>
      <a href="#" class="on"><span>Hoja1</span></a>
      <a href="#" class="other">Hoja2</a>
      <ui-icon name="plus" class="add"></ui-icon>
      <div class="bar">
        <ui-icon name="dots" class="dots"></ui-icon><ui-icon name="prev"></ui-icon><i></i><s></s><ui-icon name="next"></ui-icon>
      </div>
    `;
  }
}

class StatusBar extends UiElement {
  styles() {
    return `
      :host { display: flex; align-items: center; height: 21px; padding: 0 8px 0 11px; background: #f6f6f6; font-size: 10px; }
      .listo { width: 64px; }
      .config { display: flex; align-items: center; gap: 2px; margin-left: auto; margin-right: 18px; }
      .view { --w: 40px; }
      .view.on { background: #dedede; height: 21px; align-items: center; }
      .zoom { display: flex; align-items: center; gap: 5px; margin: 0 14px 0 5px; }
      input { appearance: none; width: 98px; height: 14px; background: linear-gradient(#333, #333) center / 100% 1px no-repeat; }
      input::-webkit-slider-thumb { appearance: none; width: 5px; height: 12px; background: #555; }
    `;
  }
  render() {
    return `
      <span class="listo">Listo</span><ui-icon name="macro"></ui-icon>
      <span class="config"><ui-icon name="display"></ui-icon>Configuración de visualización</span>
      <tool-button class="view on" icon="normal" label="Normal"></tool-button>
      <tool-button class="view" icon="page" label="Diseño de página"></tool-button>
      <tool-button class="view" icon="breaks" label="Saltos de página"></tool-button>
      <span class="zoom"><ui-icon name="minus2"></ui-icon><input type="range" min="0" max="100" value="63" aria-label="Zoom"><ui-icon name="plus2"></ui-icon></span>
      <span>175%</span>
    `;
  }
}

class TaskApp extends UiElement {
  styles() {
    return `
      :host { display: block; }
      button { display: flex; flex-direction: column; align-items: center; justify-content: center; width: 44px; height: 48px; padding-top: 6px; gap: 2px; }
      .pic { display: flex; align-items: center; height: 30px; }
      .dot { width: 6px; height: 3px; border-radius: 2px; }
      :host([open]) .dot { background: #999; }
      :host([active]) button { background: linear-gradient(#2b2b2b, #2b2b2b) center / 38px 40px no-repeat; }
      :host([active]) .dot { width: 16px; background: #5cc0e8; }
    `;
  }
  render() {
    return `<button aria-label="${this.getAttribute("icon")}"><span class="pic"><ui-icon name="${this.getAttribute("icon")}"></ui-icon></span><span class="dot"></span></button>`;
  }
}

class TaskBar extends UiElement {
  styles() {
    return `
      :host { display: flex; align-items: center; height: 48px; padding: 0 19px 0 10px; background: #1c1c1c; color: #eee; }
      .gap { flex: 3; }
      .gap.wide { flex: 5; }
      .apps, .tray { display: flex; align-items: center; }
      .search { display: flex; align-items: center; gap: 10px; width: 219px; height: 33px; margin: 0 3px 0 4px; padding: 0 2px 0 11px; border: 1px solid #4d4d4d; border-radius: 17px; background: #383838; }
      .search input { flex: 1; min-width: 0; outline: none; font-size: 13px; }
      .search input::placeholder { color: #d0d0d0; opacity: 1; }
      .tray { gap: 7px; }
      .first { display: flex; align-items: center; gap: 17px; margin-right: 12px; }
      .clock { width: 64px; text-align: right; font-size: 12px; white-space: nowrap; }
    `;
  }
  render() {
    const app = (name, state = "") => `<task-app icon="${name}" ${state}></task-app>`;
    return `
      ${app("widgets")}
      <span class="gap wide"></span>
      <div class="apps">
        ${app("windows")}
        <div class="search"><ui-icon name="search"></ui-icon><input type="search" placeholder="Búsqueda" aria-label="Búsqueda"><ui-icon name="bear"></ui-icon></div>
        ${app("taskview")}${app("copilotapp", "open")}${app("calc")}${app("folder", "open")}${app("magnify")}${app("notepad")}${app("myasus")}${app("paint")}${app("camtasia")}${app("edge", "open")}${app("obs", "open")}${app("excelapp", "active")}
      </div>
      <span class="gap"></span>
      <div class="tray">
        <div class="first"><ui-icon name="trayup"></ui-icon><ui-icon name="cloud"></ui-icon><ui-icon name="mic"></ui-icon></div>
        <ui-icon name="wifi"></ui-icon><ui-icon name="sound"></ui-icon><ui-icon name="battery"></ui-icon>
        <div class="clock">17:32<br>7/11/2025</div>
      </div>
    `;
  }
}

class ExcelApp extends UiElement {
  styles() {
    return `:host { display: flex; flex-direction: column; height: 100vh; overflow: hidden; } * { flex-shrink: 0; }`;
  }
  render() {
    return `
      <title-bar></title-bar>
      <ribbon-tabs></ribbon-tabs>
      <ribbon-bar></ribbon-bar>
      <formula-bar></formula-bar>
      <sheet-grid></sheet-grid>
      <sheet-tabs></sheet-tabs>
      <status-bar></status-bar>
      <task-bar></task-bar>
    `;
  }
}

customElements.define("ui-icon", UiIcon);
customElements.define("tool-button", ToolButton);
customElements.define("big-button", BigButton);
customElements.define("drop-down", DropDown);
customElements.define("ribbon-group", RibbonGroup);
customElements.define("title-bar", TitleBar);
customElements.define("ribbon-tabs", RibbonTabs);
customElements.define("ribbon-bar", RibbonBar);
customElements.define("formula-bar", FormulaBar);
customElements.define("sheet-grid", SheetGrid);
customElements.define("sheet-tabs", SheetTabs);
customElements.define("status-bar", StatusBar);
customElements.define("task-app", TaskApp);
customElements.define("task-bar", TaskBar);
customElements.define("excel-app", ExcelApp);
</script>
</body>
</html>
